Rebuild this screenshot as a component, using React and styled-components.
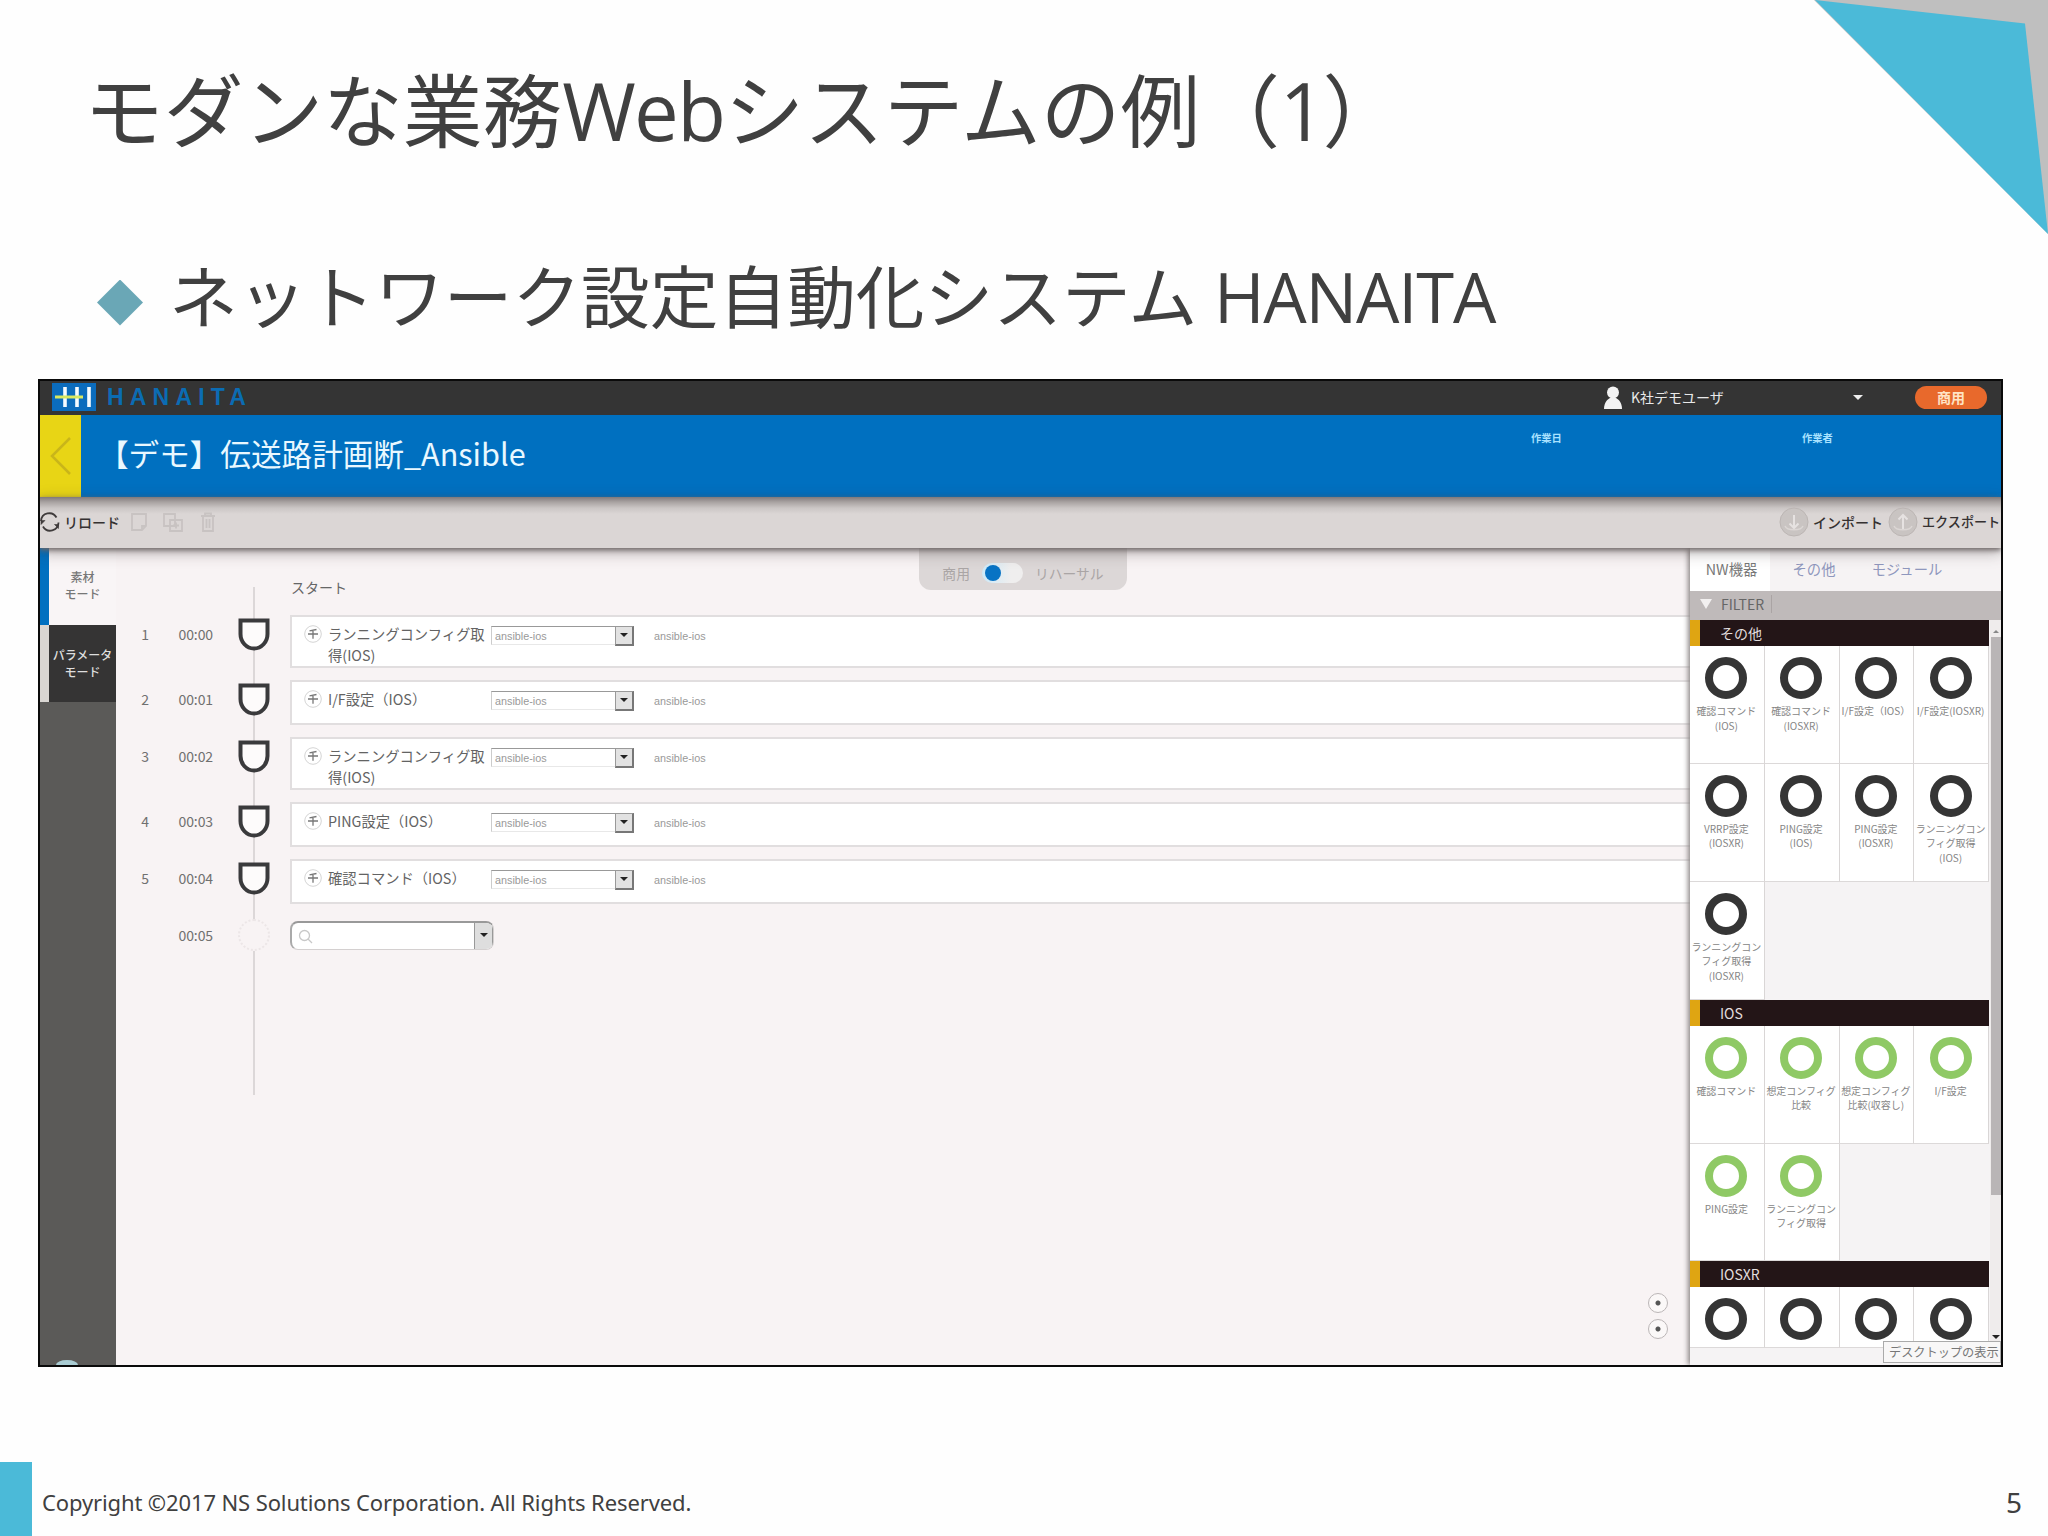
import styled, { createGlobalStyle } from "styled-components"

const jobs = [
  { id: 1, time: "00:00", name: "ランニングコンフィグ取\n得(IOS)", tall: true },
  { id: 2, time: "00:01", name: "I/F設定（IOS）" },
  { id: 3, time: "00:02", name: "ランニングコンフィグ取\n得(IOS)", tall: true },
  { id: 4, time: "00:03", name: "PING設定（IOS）" },
  { id: 5, time: "00:04", name: "確認コマンド（IOS）" },
]

const groups = [
  {
    title: "その他",
    color: "#353535",
    items: [
      "確認コマンド\n(IOS)", "確認コマンド\n(IOSXR)", "I/F設定（IOS）", "I/F設定(IOSXR)",
      "VRRP設定\n(IOSXR)", "PING設定\n(IOS)", "PING設定\n(IOSXR)", "ランニングコン\nフィグ取得\n(IOS)",
      "ランニングコン\nフィグ取得\n(IOSXR)",
    ],
  },
  {
    title: "IOS",
    color: "#8fc965",
    items: [
      "確認コマンド", "想定コンフィグ\n比較", "想定コンフィグ\n比較(収容し)", "I/F設定",
      "PING設定", "ランニングコン\nフィグ取得",
    ],
  },
  { title: "IOSXR", color: "#353535", items: ["", "", "", ""] },
]

const Shield = () => (
  <svg width="32" height="33" viewBox="0 0 32 33">
    <path d="M2.5 2.5h27v13.5c0 8-6 14.5-13.5 14.5S2.5 24 2.5 16z" fill="#fdfbfb" stroke="#3a3a3c" strokeWidth="4" />
  </svg>
)

const Logo = () => (
  <svg width="44" height="28" viewBox="0 0 44 28">
    <rect width="44" height="28" fill="#0b6cbd" />
    <path d="M13 4v20M25 4v20M37 4v20" stroke="#f4fbff" strokeWidth="3.6" />
    <path d="M3 14h28" stroke="#d8e860" strokeWidth="3" />
  </svg>
)

const ReloadIcon = () => (
  <svg width="20" height="20" viewBox="0 0 20 20" fill="none" stroke="#3f3b3b" strokeWidth="1.8">
    <path d="M1 9a8.3 8.3 0 0 1 15.5-3.5M18.5 10.5A8.3 8.3 0 0 1 3 14.5" />
    <path d="M18.5 16.5v-4h-4zM1 12.5v-4h4z" fill="#3f3b3b" strokeWidth="0.6" />
  </svg>
)

const EditIcons = () => (
  <svg width="90" height="22" viewBox="0 0 90 22" fill="none" stroke="#c8c3c2" strokeWidth="1.8">
    <path d="M3 3h14v12l-4 4H3zM17 15h-4v4" />
    <path d="M35 3h11v12H35zM41 9h12v11H41zM44 14.5h6M47 11.5v6" />
    <path d="M72 5h14M76 5V2.5h6V5M74 5v15h10V5M77.5 8v9M80.5 8v9" />
  </svg>
)

const TransferIcon = ({ up }) => (
  <svg width="30" height="30" viewBox="0 0 30 30" fill="none">
    <circle cx="15" cy="15" r="14" fill="#c9c4c2" stroke="#bcb6b4" />
    <path d={up ? "M15 22V8M10.5 12.5L15 8l4.5 4.5" : "M15 8v13M10.5 16.5L15 21l4.5-4.5"} stroke="#e6e2e1" strokeWidth="2" />
    <path d="M6 19c2 5 16 5 18 0" stroke="#dcd7d5" strokeWidth="1.5" />
  </svg>
)

const HandIcon = () => (
  <svg width="18" height="18" viewBox="0 0 18 18" fill="none" stroke="#777">
    <circle cx="9" cy="9" r="8.3" stroke="#d4d4d4" />
    <path d="M12.5 4.5L5.5 5.8M4 9h10M9 5.3v8.5" strokeWidth="1.3" />
  </svg>
)

const App = () => {
  return <Slide>
    <GlobalStyle />
    <Corner width="234" height="234" viewBox="0 0 234 234">
      <path d="M0 0h234v234z" fill="#bfbfbf" />
      <path d="M1 0l210 23.5 23 210.5z" fill="#4bbad8" />
    </Corner>
    <Title>モダンな業務<Latin $gap="-1.6px">Web</Latin>システムの例（<Latin $gap="-3px">1</Latin>）</Title>
    <Subtitle>
      <Diamond />
      <span>ネットワーク設定自動化システム<Latin $gap="-1.2px"> HANAITA</Latin></span>
    </Subtitle>

    <Window>
      <TopBar>
        <Logo />
        <Brand>HANAITA</Brand>
        <User>
          <svg width="18" height="23" viewBox="0 0 18 23" fill="#f3f3f3">
            <circle cx="9" cy="6.5" r="6" />
            <path d="M0 23c0-7 4-10 6-11h6c2 1 6 4 6 11z" />
          </svg>
          <span>K社デモユーザ</span>
        </User>
        <Caret />
        <Badge>商用</Badge>
      </TopBar>

      <TitleBar>
        <Back>
          <svg width="22" height="38" viewBox="0 0 22 38" fill="none" stroke="#c9b51a" strokeWidth="2.5">
            <path d="M20 1L2 19l18 18" />
          </svg>
        </Back>
        <Heading>【デモ】伝送路計画断_Ansible</Heading>
        <Meta $width="271px">作業日</Meta>
        <Meta $width="199px">作業者</Meta>
      </TitleBar>

      <Toolbar>
        <ReloadIcon />
        <Tool $width="69px">リロード</Tool>
        <EditIcons />
        <Spacer />
        <TransferIcon />
        <Tool $width="79px">インポート</Tool>
        <TransferIcon up />
        <Tool $width="83px" $size="13.1px">エクスポート</Tool>
      </Toolbar>

      <Body>
        <Sidebar>
          <Mode $active>{"素材\nモード"}</Mode>
          <Mode>{"パラメータ\nモード"}</Mode>
          <Help />
        </Sidebar>

        <Canvas>
          <Rail />
          <Switcher>
            <span>商用</span>
            <Track><Knob /></Track>
            <span>リハーサル</span>
          </Switcher>
          <Start>スタート</Start>
          <Jobs>
            {
              jobs.map(job => (
                <Job key={job.id} $tall={job.tall}>
                  <Num>{job.id}</Num>
                  <Num>{job.time}</Num>
                  <Mark><Shield /></Mark>
                  <Card>
                    <HandIcon />
                    <Name>{job.name}</Name>
                    <Select>
                      <span>ansible-ios</span>
                      <Arrow><Triangle /></Arrow>
                    </Select>
                    <Small>ansible-ios</Small>
                  </Card>
                </Job>
              ))
            }
            <Job>
              <Num />
              <Num>00:05</Num>
              <Mark><Empty /></Mark>
              <Search>
                <svg width="15" height="15" viewBox="0 0 15 15" fill="none" stroke="#c8c8c8" strokeWidth="1.3">
                  <circle cx="6.5" cy="6.5" r="5" />
                  <path d="M10 10l4 4" />
                </svg>
                <SearchArrow><Triangle /></SearchArrow>
              </Search>
            </Job>
          </Jobs>
          <Steppers>
            <Stepper />
            <Stepper />
          </Steppers>
        </Canvas>

        <Panel>
          <Tabs>
            <Tab $width="80px" $active>NW機器</Tab>
            <Tab $width="88px">その他</Tab>
            <Tab $width="98px">モジュール</Tab>
          </Tabs>
          <Filter><Down /><span>FILTER</span></Filter>
          <Scroll>
            <Groups>
              {
                groups.map(group => (
                  <section key={group.title}>
                    <GroupTitle>{group.title}</GroupTitle>
                    <Grid>
                      {
                        group.items.map((item, i) => (
                          <Part key={i} $short={!item}>
                            <Ring $color={group.color} />
                            <p>{item}</p>
                          </Part>
                        ))
                      }
                    </Grid>
                  </section>
                ))
              }
            </Groups>
            <Bar>
              <Triangle $up $size="3px" />
              <Thumb />
              <Triangle $size="4px" />
            </Bar>
          </Scroll>
          <Tip>デスクトップの表示</Tip>
        </Panel>
      </Body>
    </Window>

    <Footer>
      <Copyright>Copyright ©2017 NS Solutions Corporation. All Rights Reserved.</Copyright>
      <Page>5</Page>
    </Footer>
  </Slide>
}

const GlobalStyle = createGlobalStyle`
  * {
    box-sizing: border-box;
  }

  body {
    margin: 0;
    background: #fefefe;
  }

  svg {
    display: block;
    flex: none;
  }

  p {
    margin: 0;
  }
`

const Slide = styled.div`
  position: relative;
  display: flex;
  flex-direction: column;
  width: 2048px;
  height: 1536px;
  overflow: hidden;
  color: #404040;
  font-family: "Noto Sans CJK JP", sans-serif;
`

const Corner = styled.svg`
  position: absolute;
  top: 0;
  right: 0;
`

const Latin = styled.span`
  font-family: "Open Sans", sans-serif;
  letter-spacing: ${props => props.$gap};
`

const Title = styled.h1`
  height: 168px;
  margin: 26px 0 0 84px;
  font-size: 79.7px;
  font-weight: 400;
  line-height: 162px;
  white-space: nowrap;
`

const Subtitle = styled.div`
  display: flex;
  align-items: center;
  gap: 26px;
  height: 185px;
  padding: 16px 0 0 97px;
  font-size: 68.7px;
  line-height: 100px;
  white-space: pre;
`

const Diamond = styled.div`
  width: 46px;
  height: 46px;
  margin-top: 16px;
  background: #6aa7b6;
  clip-path: polygon(50% 0, 100% 50%, 50% 100%, 0 50%);
`

const Window = styled.div`
  display: flex;
  flex-direction: column;
  width: 1965px;
  height: 988px;
  margin-left: 38px;
  border: 2px solid #0a0a0a;
  overflow: hidden;
  flex: none;
`

const TopBar = styled.div`
  display: flex;
  align-items: center;
  height: 34px;
  padding: 0 14px 2px 12px;
  background: #343434;
  color: #e9e9e9;
  font-size: 14px;
`

const Brand = styled.div`
  width: 1508px;
  padding-left: 11px;
  color: #0b6cb3;
  font: bold 23px "Liberation Sans", sans-serif;
  letter-spacing: 6.2px;
`

const User = styled.div`
  display: flex;
  align-items: center;
  gap: 9px;
  width: 249px;
`

const Caret = styled.div`
  border: 5px solid transparent;
  border-top-color: #eee;
  border-bottom: 0;
`

const Badge = styled.div`
  width: 72px;
  height: 23px;
  margin-left: auto;
  border-radius: 12px;
  background: #e8692c;
  color: #ffe3c4;
  font-weight: 700;
  line-height: 22px;
  text-align: center;
`

const TitleBar = styled.div`
  display: flex;
  height: 82px;
  background: #0070c0;
  color: #e9f8ff;
`

const Back = styled.div`
  display: grid;
  place-items: center;
  width: 41px;
  background: #e8d515;
`

const Heading = styled.div`
  width: 1450px;
  padding-left: 17px;
  font-size: 30.6px;
  line-height: 77px;
`

const Meta = styled.div`
  width: ${props => props.$width};
  padding-top: 15px;
  color: #a9e2ff;
  font-size: 10.3px;
  font-weight: 700;
  line-height: 16px;
`

const Toolbar = styled.div`
  position: relative;
  z-index: 1;
  display: flex;
  align-items: center;
  height: 51px;
  padding-bottom: 2px;
  flex: none;
  background: linear-gradient(#80797a 0, #a8a2a1 5px, #cbc6c5 11px, #dbd6d5 17px);
  box-shadow: 0 2px 5px #6f6868, 0 4px 14px rgba(60, 50, 50, 0.4);
`

const Tool = styled.div`
  width: ${props => props.$width};
  padding-left: 4px;
  color: #353131;
  font-size: ${props => props.$size || "14px"};
  font-weight: 500;
  white-space: nowrap;
`

const Spacer = styled.div`
  flex: 1;
`

const Body = styled.div`
  display: flex;
  flex: 1;
  min-height: 0;
`

const Sidebar = styled.div`
  display: flex;
  flex-direction: column;
  width: 76px;
  background: #5b5a58;
`

const Mode = styled.div`
  height: 77px;
  padding-top: ${props => props.$active ? "20px" : "21px"};
  border-left: 9px solid ${props => props.$active ? "#0070c0" : "#d9d6d2"};
  background: ${props => props.$active ? "#f9f5f6" : "#353434"};
  color: ${props => props.$active ? "#777" : "#dedede"};
  font-size: 12px;
  font-weight: 500;
  line-height: 17px;
  text-align: center;
  white-space: pre;
`

const Help = styled.div`
  width: 22px;
  height: 5px;
  margin: auto 0 0 16px;
  border-radius: 50% 50% 0 0 / 100% 100% 0 0;
  background: #a9ccd3;
`

const Canvas = styled.div`
  position: relative;
  flex: 1;
  background: #f8f3f4;
`

// vertical line that runs behind the step marks
const Rail = styled.div`
  position: absolute;
  top: 39px;
  left: 137px;
  width: 2px;
  height: 508px;
  background: #dcd7d8;
`

const Switcher = styled.div`
  position: absolute;
  top: 0;
  left: 803px;
  display: flex;
  align-items: center;
  justify-content: center;
  gap: 12px;
  width: 208px;
  height: 42px;
  padding-top: 8px;
  border-radius: 0 0 12px 12px;
  background: #dcd7d7;
  color: #aaa5a5;
  font-size: 13.8px;
`

const Track = styled.div`
  width: 41px;
  height: 20px;
  padding: 2px 3px;
  border-radius: 10px;
  background: linear-gradient(90deg, #cde9f8, #efeeee 70%);
`

const Knob = styled.div`
  width: 16px;
  height: 16px;
  border-radius: 50%;
  background: #0873c4;
`

const Start = styled.div`
  height: 67px;
  padding: 28px 0 0 175px;
  color: #666;
  font-size: 14px;
  line-height: 22px;
`

const Jobs = styled.div`
  position: relative;
  display: flex;
  flex-direction: column;
  gap: 12px;
`

const Job = styled.div`
  display: grid;
  grid-template-columns: 33px 86px 55px 1fr;
  height: ${props => props.$tall ? "53px" : "45px"};
`

const Num = styled.div`
  padding-top: 9px;
  color: #707070;
  font-size: 14px;
  letter-spacing: -0.1px;
  line-height: 20px;
  text-align: right;

  & + & {
    padding-right: 22px;
  }
`

const Mark = styled.div`
  padding: 3px 0 0 3px;
`

const Card = styled.div`
  display: flex;
  align-items: flex-start;
  padding: 8px 0 0 12px;
  border: 2px solid #e1dedf;
  border-right: 0;
  background: #fff;
`

const Name = styled.div`
  width: 169px;
  margin-top: -1px;
  padding-left: 6px;
  color: #636363;
  font-size: 14.3px;
  line-height: 20.5px;
  white-space: pre;
`

const Select = styled.div`
  display: flex;
  align-items: center;
  justify-content: space-between;
  width: 143px;
  height: 19px;
  margin-top: 1px;
  padding-left: 3px;
  border-top: 1px solid #999;
  border-left: 1px solid #ccc;
  border-bottom: 1px solid #e8e8e8;
  color: #999;
  font: 10.8px "Liberation Sans", sans-serif;
`

const Arrow = styled.div`
  display: grid;
  place-items: center;
  width: 19px;
  height: 20px;
  border: 1px solid #999;
  border-right: 2px solid #777;
  border-bottom: 2px solid #777;
  background: #e2e2e2;
`

const Triangle = styled.div`
  width: 0;
  border: ${props => props.$size || "4px"} solid transparent;
  border-top-color: ${props => props.$up ? "transparent" : "#222"};
  border-bottom-color: ${props => props.$up ? "#888" : "transparent"};
  border-${props => props.$up ? "top" : "bottom"}-width: 0;
`

const Small = styled.div`
  padding: 5px 0 0 20px;
  color: #999;
  font: 10.8px "Liberation Sans", sans-serif;
  line-height: 13px;
`

const Empty = styled.div`
  width: 32px;
  height: 32px;
  border: 2px dotted #ece6e7;
  border-radius: 50%;
  background: #f8f3f4;
`

const Search = styled.div`
  display: flex;
  align-items: center;
  justify-content: space-between;
  width: 204px;
  height: 29px;
  margin-top: 5px;
  padding-left: 6px;
  border: 1px solid #d4d0d0;
  border-top: 2px solid #999;
  border-left: 2px solid #aaa;
  border-radius: 8px;
  background: #fff;
  overflow: hidden;
`

const SearchArrow = styled.div`
  width: 19px;
  height: 28px;
  padding: 10px 0 0 5px;
  border: 1px solid #999;
  background: #dedede;
`

const Steppers = styled.div`
  position: absolute;
  right: 22px;
  bottom: 26px;
  display: flex;
  flex-direction: column;
  gap: 6px;
`

const Stepper = styled.div`
  width: 20px;
  height: 20px;
  border: 1px solid #bbb6b7;
  border-radius: 50%;
  background: radial-gradient(#555 2px, #fbf8f8 3px);
`

const Panel = styled.div`
  position: relative;
  display: flex;
  flex-direction: column;
  width: 311px;
  background: #f5f3f4;
  box-shadow: -2px 0 5px #8c8686;
`

const Tabs = styled.div`
  display: flex;
  height: 43px;
  flex: none;
  background: #f6f3f4;
`

const Tab = styled.div`
  width: ${props => props.$width};
  padding-left: ${props => props.$active ? "3px" : "0"};
  background: ${props => props.$active ? "#fff" : "none"};
  color: ${props => props.$active ? "#777" : "#8f97bd"};
  font-size: 14.3px;
  line-height: 42px;
  text-align: center;
`

const Filter = styled.div`
  display: flex;
  align-items: center;
  gap: 9px;
  height: 29px;
  flex: none;
  padding: 0 0 3px 10px;
  background: #bfbaba;
  color: #666;
  font-size: 14px;

  span {
    padding-right: 7px;
    border-right: 1px solid #aaa4a4;
    line-height: 18px;
  }
`

const Down = styled.div`
  border: 6px solid transparent;
  border-top: 10px solid #f2f0f0;
  border-bottom: 0;
`

const Scroll = styled.div`
  display: flex;
  justify-content: space-between;
  flex: 1;
  min-height: 0;
`

const Groups = styled.div`
  width: 299px;
  overflow: hidden;
`

const GroupTitle = styled.div`
  height: 26px;
  padding-left: 20px;
  border-left: 10px solid #dfa512;
  background: #231517;
  color: #e2dede;
  font-size: 14px;
  line-height: 26px;
`

const Grid = styled.div`
  display: grid;
  grid-template-columns: repeat(4, 74.75px);
`

const Part = styled.div`
  height: ${props => props.$short ? "61px" : "117.9px"};
  padding: 11px 1px 0 0;
  border-right: 1px solid #d9d6d6;
  border-bottom: 1px solid #dcd9d9;
  background: #fff;
  color: #858585;
  font-size: 10px;
  line-height: 14.5px;
  text-align: center;
  white-space: pre;

  p {
    display: flex;
    justify-content: center;
    margin-top: 5px;
  }
`

const Ring = styled.div`
  width: 42px;
  height: 42px;
  margin: 0 auto;
  border: 8.5px solid ${props => props.$color};
  border-radius: 50%;
`

const Bar = styled.div`
  display: flex;
  flex-direction: column;
  align-items: center;
  width: 11px;
  padding: 10px 0 26px;
  background: #efecec;
`

const Thumb = styled.div`
  width: 10px;
  height: 558px;
  margin: 4px 0 auto;
  background: #b9b5b6;
`

const Tip = styled.div`
  position: absolute;
  right: 0;
  bottom: 2px;
  width: 118px;
  height: 22px;
  padding-left: 5px;
  border: 1px solid #aaa;
  background: #f8f7f7;
  color: #777;
  font-size: 12.2px;
  line-height: 20px;
  white-space: nowrap;
`

const Footer = styled.div`
  display: flex;
  align-items: center;
  justify-content: space-between;
  height: 74px;
  margin-top: auto;
  padding: 6px 26px 0 10px;
  border-left: 32px solid #4bbad8;
  font-family: "Noto Sans", sans-serif;
`

const Copyright = styled.div`
  font-size: 22px;
  letter-spacing: -0.12px;
`

const Page = styled.div`
  font-size: 28px;
`

export default App
